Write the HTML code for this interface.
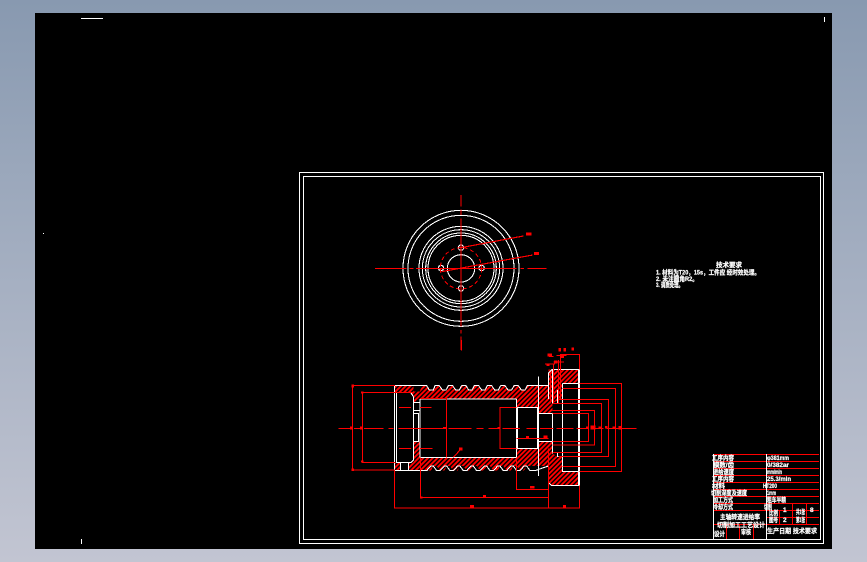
<!DOCTYPE html>
<html><head><meta charset="utf-8"><style>
html,body{margin:0;padding:0;width:867px;height:562px;overflow:hidden}
body{background:linear-gradient(180deg,#8899b0 0%,#9aa7bb 30%,#c2c5d2 100%)}
svg{position:absolute;left:0;top:0;display:block}
text{font-family:"Liberation Sans","Noto Sans CJK SC",sans-serif;font-weight:700;fill:#fff;font-size:6.5px;stroke:#fff;stroke-width:.25}
</style></head><body>
<svg width="867" height="562" viewBox="0 0 867 562" shape-rendering="crispEdges">
<defs><pattern id="h" width="10" height="10" patternUnits="userSpaceOnUse" patternTransform="rotate(-45)"><rect width="10" height="10" fill="#f00"/><rect width="10" height="4" fill="#000"/></pattern></defs>
<rect x="35" y="13" width="797" height="536" fill="#000"/>
<g fill="#fff"><rect x="81" y="18" width="22" height="1"/><rect x="824" y="17" width="1" height="5"/><rect x="43" y="233" width="1" height="1"/><rect x="81" y="539" width="1" height="5"/></g>
<g fill="none" stroke="#fff" stroke-width="1"><rect x="299.500" y="172.500" width="524" height="371"/><rect x="303.500" y="176.500" width="517" height="363"/></g>

<!-- front view -->
<g transform="translate(390,200) scale(.33333)" fill="none">
<g stroke="#fff" stroke-width="3.200"><circle cx="213" cy="205" r="174"/><circle cx="213" cy="205" r="159"/><circle cx="213" cy="205" r="126"/><circle cx="213" cy="205" r="116"/><circle cx="213" cy="205" r="106"/><circle cx="213" cy="205" r="99"/><circle cx="213" cy="205" r="41"/><circle cx="213" cy="143" r="8"/><circle cx="213" cy="265" r="8"/><circle cx="153" cy="204" r="8"/><circle cx="275" cy="204" r="8"/></g>
<circle cx="213" cy="205" r="62" stroke="#f00" stroke-width="3" stroke-dasharray="12 8"/>
<path d="M-45,205H50M58,205H70M78,205H380M392,205H402M412,205H470" stroke="#f00" stroke-width="3"/>
<path d="M213,-15V20M213,28V45M213,55V380M213,390V400M213,410V450" stroke="#f00" stroke-width="3"/>
<path d="M213,143L400,108M155,215L428,165" stroke="#f00" stroke-width="3.500"/>
<path d="M408,97h16v10h-16zM432,156h15v9h-15z" fill="#f00"/>
</g>

<!-- section view -->
<g transform="translate(340,340) scale(.33333)">
<!-- hatch -->
<path d="M165,137H220L222,155H240L245,137H260L268,150H280L285,137H298L307,150H318L325,137H338L347,150H358L365,137H378L386,150H396L403,137H416L425,150H435L442,137H455L464,150H475L482,137H495L504,150H515L522,137H535L544,150H555L562,137H625V88H718V130H668V178L655,180L637,190V220H595V202H530V177H240L222,188H220V175L215,157H165Z" fill="url(#h)"/>
<path d="M222,305H240V352H530V325H595V305H637V340L652,350H668V395H718V437H635L625,428V378H560L552,392H540L530,378H520L513,392H500L490,378H480L473,392H460L450,378H440L433,392H420L410,378H400L393,392H380L370,378H360L353,392H340L330,378H320L313,392H300L290,378H280L273,392H240L207,390V368H220Z" fill="url(#h)"/>
<rect x="165" y="368" width="16" height="22" fill="url(#h)"/>
<!-- white outline -->
<g fill="none" stroke="#fff" stroke-width="3.200" stroke-linejoin="miter">
<path d="M165,137H220L240,137H245L250,137H260L268,150H280L285,137H298L307,150H318L325,137H338L347,150H358L365,137H378L386,150H396L403,137H416L425,150H435L442,137H455L464,150H475L482,137H495L504,150H515L522,137H535L544,150H555L562,137H625"/>
<path d="M240,392H260L273,378H280L290,392H300L313,378H320L330,392H340L353,378H360L370,392H380L393,378H400L410,392H420L433,378H440L450,392H460L473,378H480L490,392H500L513,378H520L530,392H540L552,378H560L570,392H585L625,378"/>
<path d="M164,137V392H240"/>
<path d="M169,157H212L220,170V360L212,368H169Z"/>
<path d="M222,188H240M222,212H240M222,220H236V305H222M240,177V352M240,177H530M240,352H530"/>
<path d="M182,368V390M205,368V390"/>
<path d="M530,177V352M533,202H592V325H533Z"/>
<path d="M595,110V408M595,220H637V340M595,305H637"/>
<path d="M625,177V100L637,88H718V437H635L625,428V378"/>
<path d="M637,88V190M637,305V338H652V350H668M652,190H637M652,150V190"/>
<path d="M668,130H718M668,130V395H718"/>
<path d="M716,88V437M718,130V395" stroke-width="5"/>
</g>
<!-- red dims -->
<g fill="none" stroke="#f00" stroke-width="3.300">
<path d="M-5,265H30M42,265H60M72,265H130M145,265H160M175,265H315M325,265H395M410,265H430M445,265H475M487,265H540M560,265H590M600,265H640M650,265H700M710,265H745M755,265H790M800,265H890"/>
<path d="M364,0V32"/>
<path d="M165,137H38V390H165"/>
<path d="M218,157H67V367H165"/>
<path d="M177,202H213M240,202H275M177,325H213M240,325H278"/>
<path d="M240,175H320V352M320,175V265"/>
<path d="M242,352V472H625"/>
<path d="M164,392V504H718V437M625,437V504"/>
<path d="M530,352V448H625"/>
<path d="M530,202H480V325H530M530,296H625M625,325V437"/>
<path d="M632,100V190M640,70V190M655,60V190M662,50V180M670,44H718V88"/>
<path d="M718,130H845V394H718"/>
<path d="M668,146H827V380H668"/>
<path d="M655,179H806V349H655"/>
<path d="M637,190H785V338H637"/>
<path d="M637,211H764V315H637"/>
<path d="M637,221H746V304H637"/>
<path d="M340,352L362,328M615,72H645M650,46H680M640,66H672M622,48L640,50"/>
</g>
<g fill="#f00">
<rect x="34" y="134" width="8" height="8"/><rect x="34" y="385" width="8" height="8"/><rect x="30" y="260" width="9" height="8"/><rect x="60" y="260" width="9" height="8"/><rect x="63" y="155" width="8" height="6"/><rect x="63" y="362" width="8" height="6"/>
<rect x="309" y="261" width="9" height="6"/><rect x="472" y="261" width="8" height="6"/><rect x="558" y="288" width="9" height="6"/><rect x="610" y="286" width="13" height="8"/>
<rect x="570" y="438" width="14" height="7"/><rect x="429" y="465" width="9" height="7"/><rect x="390" y="495" width="12" height="8"/><rect x="669" y="495" width="9" height="8"/><rect x="240" y="470" width="8" height="6"/>
<rect x="357" y="322" width="10" height="10"/><rect x="738" y="260" width="8" height="6"/><rect x="752" y="256" width="14" height="12"/><rect x="775" y="260" width="9" height="6"/><rect x="795" y="258" width="8" height="8"/><rect x="818" y="260" width="8" height="6"/><rect x="835" y="258" width="9" height="10"/>
<rect x="622" y="40" width="14" height="8"/><rect x="655" y="24" width="8" height="10"/><rect x="670" y="24" width="8" height="10"/><rect x="694" y="22" width="8" height="10"/><rect x="660" y="42" width="12" height="12"/><rect x="620" y="72" width="8" height="6"/><rect x="642" y="62" width="10" height="8"/>
</g>
</g>

<!-- notes -->
<text x="716" y="267">技术要求</text>
<text x="656" y="274.500" textLength="104" lengthAdjust="spacingAndGlyphs">1. 材料为T20，15s，工件应 经时效处理。</text>
<text x="656" y="281" textLength="42" lengthAdjust="spacingAndGlyphs">2. 未注圆角R2。</text>
<text x="656" y="287" textLength="27" lengthAdjust="spacingAndGlyphs">3. 调质处理。</text>

<!-- title block -->
<g fill="none" stroke="#f00" stroke-width="1">
<path d="M713.500,454.500H819M713.500,461.500H819M713.500,468.500H819M713.500,475.500H819M713.500,482.500H819M713.500,489.500H819M713.500,496.500H819M713.500,503.500H819M713.500,510.500H819M713.500,524.500H819"/>
<path d="M766.500,517.500H819M779.500,510.500V524.500M792.500,503.500V524.500M806.500,503.500V524.500M726.500,524.500V539M739.500,524.500V539M753.500,524.500V539"/>
</g>
<path d="M713.500,454V539M766.500,454V539" stroke="#fff" stroke-width="1" fill="none"/>
<g>
<text x="712" y="460" textLength="22" lengthAdjust="spacingAndGlyphs">工序内容</text>
<text x="713" y="467" textLength="21" lengthAdjust="spacingAndGlyphs">模数/齿</text>
<text x="713" y="474" textLength="21" lengthAdjust="spacingAndGlyphs">进给速度</text>
<text x="712" y="481" textLength="22" lengthAdjust="spacingAndGlyphs">工序内容</text>
<text x="712" y="488" textLength="13" lengthAdjust="spacingAndGlyphs">材料</text>
<text x="711" y="495" textLength="36" lengthAdjust="spacingAndGlyphs">切削深度及速度</text>
<text x="713" y="502" textLength="20" lengthAdjust="spacingAndGlyphs">加工方式</text>
<text x="713" y="509" textLength="20" lengthAdjust="spacingAndGlyphs">冷却方式</text>
<text x="720" y="519" textLength="40" lengthAdjust="spacingAndGlyphs">主轴转速进给率</text>
<text x="717" y="527" textLength="48" lengthAdjust="spacingAndGlyphs">切削加工工艺设计</text>
<text x="714" y="536" textLength="11" lengthAdjust="spacingAndGlyphs">设计</text>
<text x="741" y="534" textLength="10" lengthAdjust="spacingAndGlyphs">审核</text>
<text x="767" y="460" textLength="22" lengthAdjust="spacingAndGlyphs">φ381mm</text>
<text x="767" y="467" textLength="22" lengthAdjust="spacingAndGlyphs">0/382ar</text>
<text x="767" y="474" textLength="15" lengthAdjust="spacingAndGlyphs">mm/min</text>
<text x="767" y="481" textLength="24" lengthAdjust="spacingAndGlyphs">25.3/min</text>
<text x="763" y="488" textLength="14" lengthAdjust="spacingAndGlyphs">HT200</text>
<text x="767" y="495" textLength="9" lengthAdjust="spacingAndGlyphs">1mm</text>
<text x="767" y="502" textLength="19" lengthAdjust="spacingAndGlyphs">粗车半精</text>
<text x="764" y="509" textLength="8" lengthAdjust="spacingAndGlyphs">切削</text>
<text x="769" y="515" textLength="9" lengthAdjust="spacingAndGlyphs">比例</text>
<text x="783" y="512">1</text>
<text x="796" y="514" textLength="9" lengthAdjust="spacingAndGlyphs">共1张</text>
<text x="810" y="512">8</text>
<text x="769" y="522" textLength="9" lengthAdjust="spacingAndGlyphs">图号</text>
<text x="783" y="522">2</text>
<text x="796" y="522" textLength="9" lengthAdjust="spacingAndGlyphs">第1张</text>
<text x="767" y="533" textLength="50" lengthAdjust="spacingAndGlyphs">生产日期 技术要求</text>
</g>
</svg>
</body></html>
